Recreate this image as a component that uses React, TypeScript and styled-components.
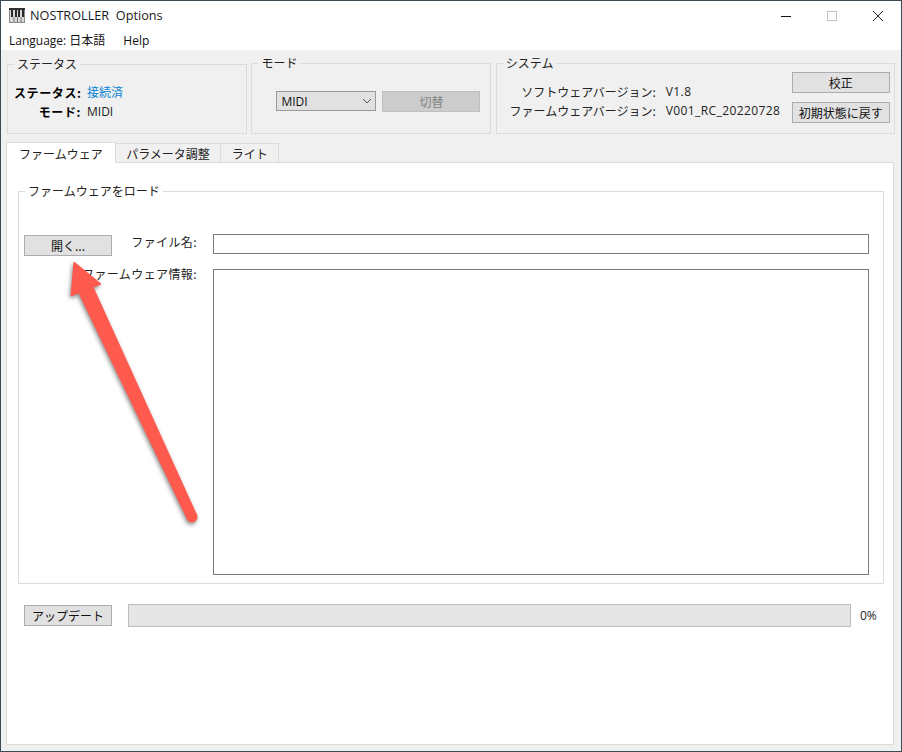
import React from 'react';
import styled, { createGlobalStyle } from 'styled-components';

const GlobalStyle = createGlobalStyle`
  html, body {
    margin: 0;
    padding: 0;
    background: #3c4a54;
  }
  * {
    box-sizing: border-box;
  }
`;

const uiFont = `"Open Sans", "Noto Sans", "Noto Sans CJK JP", sans-serif`;
const cjkFont = `"Noto Sans CJK JP", "Noto Sans", sans-serif`;

const PianoIcon = () => (
  <svg width="16" height="15" viewBox="0 0 16 15">
    <rect x="0" y="0" width="16" height="15" fill="#8a8a8a" />
    <rect x="1" y="1" width="14" height="13" fill="#d8d8d8" />
    <rect x="0" y="0" width="16" height="2" fill="#333" />
    <rect x="2" y="1" width="2" height="8" fill="#2a2a2a" />
    <rect x="6" y="1" width="2" height="8" fill="#2a2a2a" />
    <rect x="9" y="1" width="2" height="8" fill="#2a2a2a" />
    <rect x="13" y="1" width="2" height="8" fill="#2a2a2a" />
    <path d="M5 9v5M8.500 9v5M12 9v5" stroke="#777" strokeWidth="1" />
  </svg>
);

const App: React.FC = () => {
  return (
    <>
      <GlobalStyle />
      <Screen>
        <Window>
          <Header>
            <TitleBar>
              <PianoIcon />
              <TitleText>NOSTROLLER&nbsp;&nbsp;Options</TitleText>
              <WindowControls>
                <WindowButton>
                  <svg width="12" height="12" viewBox="0 0 12 12">
                    <path d="M1 6.500h10" stroke="#111" strokeWidth="1" />
                  </svg>
                </WindowButton>
                <WindowButton>
                  <svg width="12" height="12" viewBox="0 0 12 12">
                    <rect x="1.500" y="1.500" width="9" height="9" fill="none" stroke="#c4c4c4" />
                  </svg>
                </WindowButton>
                <WindowButton>
                  <svg width="12" height="12" viewBox="0 0 12 12">
                    <path d="M1 1l10 10M11 1L1 11" stroke="#222" strokeWidth="1" />
                  </svg>
                </WindowButton>
              </WindowControls>
            </TitleBar>
            <MenuBar>
              <MenuItem>Language: 日本語</MenuItem>
              <MenuItem>Help</MenuItem>
            </MenuBar>
          </Header>

          <Body>
            <TopRow>
              <StatusBox>
                <GroupLegend>ステータス</GroupLegend>
                <StatusGrid>
                  <StatusLabel>ステータス:</StatusLabel>
                  <StatusValue $online>接続済</StatusValue>
                  <StatusLabel>モード:</StatusLabel>
                  <StatusValue>MIDI</StatusValue>
                </StatusGrid>
              </StatusBox>

              <GroupBox>
                <GroupLegend>モード</GroupLegend>
                <ModeRow>
                  <ComboBox>
                    MIDI
                    <svg width="10" height="6" viewBox="0 0 10 6">
                      <path d="M1 1l4 4 4-4" fill="none" stroke="#555" strokeWidth="1" />
                    </svg>
                  </ComboBox>
                  <SwitchButton disabled>切替</SwitchButton>
                </ModeRow>
              </GroupBox>

              <GroupBox>
                <GroupLegend>システム</GroupLegend>
                <SystemRow>
                  <VersionGrid>
                    <VersionLabel>ソフトウェアバージョン:</VersionLabel>
                    <VersionValue>V1.8</VersionValue>
                    <VersionLabel>ファームウェアバージョン:</VersionLabel>
                    <VersionValue>V001_RC_20220728</VersionValue>
                  </VersionGrid>
                  <SystemButtons>
                    <PushButton>校正</PushButton>
                    <PushButton>初期状態に戻す</PushButton>
                  </SystemButtons>
                </SystemRow>
              </GroupBox>
            </TopRow>

            <TabBar>
              <Tab $active>ファームウェア</Tab>
              <Tab>パラメータ調整</Tab>
              <Tab>ライト</Tab>
            </TabBar>

            <TabPane>
              <LoadGroup>
                <GroupLegend>ファームウェアをロード</GroupLegend>
                <LoadGrid>
                  <FileCell>
                    <OpenButton>開く...</OpenButton>
                    <FieldLabel>ファイル名:</FieldLabel>
                  </FileCell>
                  <FileInput readOnly />
                  <FieldLabel>ファームウェア情報:</FieldLabel>
                  <InfoBox readOnly />
                </LoadGrid>
              </LoadGroup>

              <UpdateRow>
                <OpenButton>アップデート</OpenButton>
                <ProgressTrack />
                <ProgressText>0%</ProgressText>
              </UpdateRow>
            </TabPane>
          </Body>

          <Annotation width="140" height="280" viewBox="0 0 140 280">
            <circle cx="124" cy="260" r="5.500" fill="#ff5a4e" />
            <path d="M129 257.700L25.300 29.600L10.700 36.400L119 262.300Z" fill="#ff5a4e" />
            <path d="M6 5L3 39L33 27Z" fill="#ff5a4e" stroke="#ff5a4e" strokeWidth="1" strokeLinejoin="round" />
          </Annotation>
        </Window>
      </Screen>
    </>
  );
};

const Screen = styled.div`
  width: 902px;
  height: 752px;
  padding: 1px;
`;

const Window = styled.div`
  position: relative;
  display: flex;
  flex-direction: column;
  height: 100%;
  background: #f0f0f0;
  font-family: ${uiFont};
  font-size: 12px;
  color: #111;
  overflow: hidden;
`;

const Header = styled.header`
  height: 49px;
  background: #fff;
`;

const TitleBar = styled.div`
  display: flex;
  align-items: center;
  height: 29px;
  padding-left: 8px;
`;

const TitleText = styled.span`
  margin-left: 5px;
  padding-bottom: 2px;
  font-size: 12.700px;
  color: #1a1a1a;
`;

const WindowControls = styled.div`
  display: flex;
  margin-left: auto;
`;

const WindowButton = styled.div`
  display: flex;
  align-items: center;
  justify-content: center;
  width: 46px;
  height: 29px;
`;

const MenuBar = styled.nav`
  display: flex;
  gap: 18px;
  height: 20px;
  padding-left: 8px;
  align-items: center;
`;

const MenuItem = styled.span`
  font-size: 12px;
  color: #111;
`;

const Body = styled.main`
  display: flex;
  flex-direction: column;
  flex: 1;
  min-height: 0;
`;

const TopRow = styled.div`
  display: grid;
  grid-template-columns: 240px 240px 399px;
  column-gap: 4.400px;
  height: 92px;
  padding: 6px 0 0 6px;
`;

const GroupBox = styled.fieldset`
  margin: 0;
  min-width: 0;
  height: 78px;
  padding: 0 5px;
  border: 1px solid #dcdcdc;
`;

const StatusBox = styled(GroupBox)`
  margin-top: 1px;
  height: 77px;
`;

const GroupLegend = styled.legend`
  height: 14px;
  padding: 0 3px;
  margin-left: 1px;
  font-family: ${cjkFont};
  font-size: 12px;
  line-height: 14px;
  color: #222;
`;

const StatusGrid = styled.div`
  display: grid;
  grid-template-columns: 67px auto;
  justify-content: start;
  column-gap: 6px;
  row-gap: 4px;
  margin-top: 14px;
  padding-left: 1px;
`;

const StatusLabel = styled.span`
  font-family: ${cjkFont};
  font-size: 12px;
  font-weight: 700;
  letter-spacing: 0.600px;
  line-height: 15px;
  text-align: right;
  white-space: nowrap;
  color: #000;
`;

const StatusValue = styled.span<{ $online?: boolean }>`
  font-family: ${uiFont};
  font-size: 12px;
  line-height: 15px;
  color: ${({ $online }) => ($online ? '#0a84d6' : '#222')};
`;

const ModeRow = styled.div`
  display: flex;
  gap: 6px;
  margin-top: 21px;
  padding-left: 19px;
`;

const ComboBox = styled.div`
  display: flex;
  align-items: center;
  justify-content: space-between;
  width: 100px;
  height: 20px;
  padding: 0 3px 0 4px;
  background: #e1e1e1;
  border: 1px solid #9a9a9a;
  font-size: 12px;
  color: #111;
`;

const PushButton = styled.button`
  width: 98px;
  height: 21px;
  padding: 0;
  background: #e1e1e1;
  border: 1px solid #adadad;
  border-radius: 0;
  font-family: ${cjkFont};
  font-size: 12px;
  line-height: 1;
  color: #111;
`;

const SwitchButton = styled(PushButton)`
  background: #cccccc;
  border-color: #bfbfbf;
  color: #838383;
`;

const SystemRow = styled.div`
  display: flex;
  justify-content: space-between;
  margin-right: -1px;
  padding: 2px 0 0 6px;
`;

const VersionGrid = styled.div`
  display: grid;
  grid-template-columns: 148px auto;
  column-gap: 10px;
  row-gap: 4px;
  align-content: start;
  margin-top: 12px;
`;

const VersionLabel = styled.span`
  font-family: ${cjkFont};
  font-size: 12px;
  line-height: 15px;
  text-align: right;
  white-space: nowrap;
  justify-self: end;
  color: #222;
`;

const VersionValue = styled.span`
  font-size: 12px;
  line-height: 15px;
  letter-spacing: 0.400px;
  white-space: nowrap;
  color: #222;
`;

const SystemButtons = styled.div`
  display: flex;
  flex-direction: column;
  gap: 9px;
`;

const TabBar = styled.div`
  display: flex;
  align-items: flex-end;
  height: 20px;
  padding-left: 5px;
  position: relative;
  z-index: 1;
`;

const Tab = styled.div<{ $active?: boolean }>`
  display: flex;
  align-items: center;
  justify-content: center;
  height: ${({ $active }) => ($active ? '21px' : '20px')};
  margin-bottom: -1px;
  padding: 0 ${({ $active }) => ($active ? '12px' : '10.500px')};
  background: ${({ $active }) => ($active ? '#fff' : '#f0f0f0')};
  border: 1px solid #dcdcdc;
  border-bottom: ${({ $active }) => ($active ? '0' : '1px solid #dcdcdc')};
  border-left: ${({ $active }) => ($active ? '1px solid #dcdcdc' : '0')};
  font-family: ${cjkFont};
  font-size: 12px;
  white-space: nowrap;
  color: #222;
`;

const TabPane = styled.section`
  display: flex;
  flex-direction: column;
  flex: 1;
  min-height: 0;
  margin: 0 7px 6px 5px;
  padding: 21px 9px 0 11px;
  background: #fff;
  border: 1px solid #dcdcdc;
`;

const LoadGroup = styled.fieldset`
  margin: 0;
  min-width: 0;
  height: 400px;
  padding: 36px 14px 0 5px;
  border: 1px solid #dcdcdc;
`;

const LoadGrid = styled.div`
  display: grid;
  grid-template-columns: 173px 1fr;
  grid-template-rows: 20px 306px;
  column-gap: 16px;
  row-gap: 15px;
`;

const FieldLabel = styled.span`
  font-family: ${cjkFont};
  font-size: 12px;
  letter-spacing: 0.400px;
  line-height: 9px;
  text-align: right;
  white-space: nowrap;
  color: #222;
`;

const OpenButton = styled(PushButton)`
  flex: none;
  width: 88px;
`;

const FileCell = styled.div`
  display: flex;
  justify-content: space-between;
  align-items: flex-start;

  ${FieldLabel} {
    padding-top: 3px;
  }

  ${OpenButton} {
    margin-top: 1px;
  }
`;

const FileInput = styled.input`
  width: 100%;
  height: 20px;
  padding: 0 2px;
  background: #fff;
  border: 1px solid #7a7a7a;
  border-radius: 0;
  outline: none;
`;

const InfoBox = styled.textarea`
  display: block;
  width: 100%;
  height: 306px;
  padding: 2px;
  background: #fff;
  border: 1px solid #7a7a7a;
  border-radius: 0;
  outline: none;
  resize: none;
`;

const UpdateRow = styled.div`
  display: flex;
  align-items: center;
  height: 23px;
  margin-top: 20px;
  padding-left: 6px;
`;

const ProgressTrack = styled.div`
  flex: 1;
  height: 23px;
  margin-left: 16px;
  background: #e6e6e6;
  border: 1px solid #bcbcbc;
`;

const ProgressText = styled.span`
  width: 33px;
  padding-left: 9px;
  font-size: 12px;
  color: #222;
`;

const Annotation = styled.svg`
  position: absolute;
  left: 67px;
  top: 256px;
  overflow: visible;
  filter: drop-shadow(-1px 2px 2px rgba(40, 40, 40, 0.55));
  pointer-events: none;
`;

export default App;
